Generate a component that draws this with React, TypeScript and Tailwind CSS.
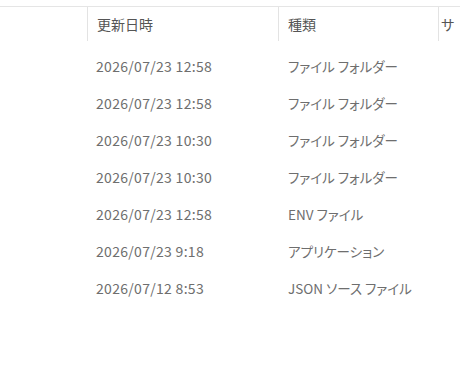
import React from "react";

const rows = [
  ["2026/07/23 12:58", "ファイル フォルダー"],
  ["2026/07/23 12:58", "ファイル フォルダー"],
  ["2026/07/23 10:30", "ファイル フォルダー"],
  ["2026/07/23 10:30", "ファイル フォルダー"],
  ["2026/07/23 12:58", "ENV ファイル"],
  ["2026/07/23 9:18", "アプリケーション"],
  ["2026/07/12 8:53", "JSON ソース ファイル"],
];

export default function App() {
  return (
    <div
      className="w-[460px] h-[380px] bg-white overflow-hidden [font-feature-settings:'palt']"
      style={{ fontFamily: '"Noto Sans CJK JP", "Noto Sans", sans-serif' }}
    >
      <div className="mt-[6px] border-t border-[#e5e5e5] flex h-[35px]">
        <div className="w-[87px] shrink-0" />
        <div className="w-[191px] shrink-0 border-l border-[#e3e3e3] pl-[9px] flex items-center text-[14px] text-[#555555]">
          更新日時
        </div>
        <div className="w-[160px] shrink-0 border-l border-[#e3e3e3] pl-[9px] flex items-center text-[14px] text-[#555555]">
          種類
        </div>
        <div className="flex-1 border-l border-[#e3e3e3] pl-[2px] flex items-center text-[14px] text-[#555555] whitespace-nowrap overflow-hidden">
          サ
        </div>
      </div>
      <div className="pt-[7px] flex flex-col">
        {rows.map(([d, t], i) => (
          <div key={i} className="flex h-[37px] items-center text-[#6e6e6e]">
            <div className="w-[87px] shrink-0" />
            <div className="w-[191px] shrink-0 pl-[9px] text-[14px] tracking-[0.3px]">{d}</div>
            <div className="w-[160px] shrink-0 pl-[10px] whitespace-nowrap text-[13.5px]">{t}</div>
          </div>
        ))}
      </div>
    </div>
  );
}
